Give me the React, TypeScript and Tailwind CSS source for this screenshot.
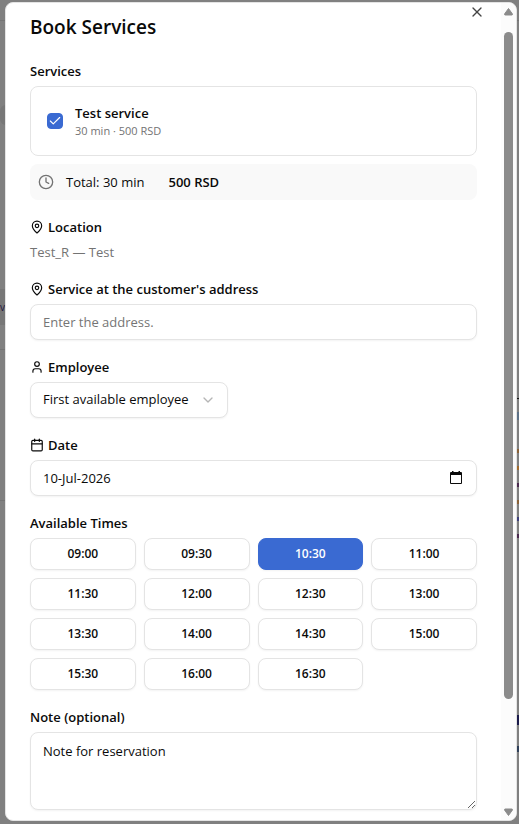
import { useState } from 'react'
import type { ReactNode } from 'react'
import { Calendar, Check, ChevronDown, Clock, MapPin, User, X } from 'lucide-react'
import clsx from 'clsx'

const TIMES = [
    '09:00', '09:30', '10:30', '11:00',
    '11:30', '12:00', '12:30', '13:00',
    '13:30', '14:00', '14:30', '15:00',
    '15:30', '16:00', '16:30',
]

const fieldClass = 'w-full rounded-lg border border-[#e4e4e4] bg-white px-3 text-[13px] shadow-xs outline-none placeholder:text-[#757575]'

function FieldLabel({ htmlFor, children }: { htmlFor?: string; children: ReactNode }) {
    return (
        <label htmlFor={htmlFor} className="flex items-center gap-1 text-[13px] leading-[14px] font-semibold">
            {children}
        </label>
    )
}

// Page that sits dimmed behind the dialog
function Backdrop() {
    return (
        <div aria-hidden="true" className="absolute inset-0 overflow-hidden bg-[#808080]">
            <div className="absolute inset-x-0 top-5 border-t border-[#747474]" />
            <div className="absolute top-[105px] left-0 h-5 w-5 rounded-md bg-[#777777]" />
            <div className="absolute top-[289px] left-0 flex h-9 w-5 items-center bg-[#777777]">
                <span className="text-[10px] text-[#1c1440]">v</span>
            </div>
            <div className="absolute top-[349px] left-0 w-5 border-t border-[#747474]" />
            <div className="absolute top-[500px] left-0 w-5 border-t border-[#747474]" />
            <div className="absolute top-[398px] right-0 flex w-0.5 flex-col gap-[13px]">
                <div className="h-px bg-[#111111]" />
                <div className="h-2 bg-[#5d7187]" />
                <div className="mt-4 h-1 bg-[#8a6238]" />
                <div className="h-1 bg-[#a06a2c]" />
                <div className="h-1 bg-[#4b2a50]" />
                <div className="h-1 bg-[#8a6238]" />
                <div className="h-1 bg-[#3d3f7a]" />
                <div className="h-1 bg-[#4b2a50]" />
            </div>
            <div className="absolute top-[715px] right-0 h-2.5 w-0.5 bg-[#1a1a4a]" />
            <div className="absolute top-[746px] right-0 h-1.5 w-0.5 bg-[#2f3f58]" />
        </div>
    )
}

function Scrollbar() {
    return (
        <div aria-hidden="true" className="flex w-[15px] shrink-0 flex-col items-center bg-[#fcfcfc] pt-1 pb-[3px] text-[#8b8b8b]">
            <svg viewBox="0 0 9 9" className="h-[9px] w-[9px]" fill="currentColor">
                <path d="M4.5 1.5 8.3 6.8Q8.8 8 7.8 8H1.2Q.2 8 .7 6.8Z" stroke="currentColor" strokeLinejoin="round" />
            </svg>
            <div className="mt-4 w-[9px] grow-[667] rounded-full bg-[#8b8b8b]" />
            <div className="grow-[109]" />
            <svg viewBox="0 0 9 9" className="h-[9px] w-[9px]" fill="currentColor">
                <path d="M4.5 7.5 8.3 2.2Q8.8 1 7.8 1H1.2Q.2 1 .7 2.2Z" stroke="currentColor" strokeLinejoin="round" />
            </svg>
        </div>
    )
}

export default function App() {
    const [selected, setSelected] = useState(true)
    const [address, setAddress] = useState('')
    const [date, setDate] = useState('10-Jul-2026')
    const [time, setTime] = useState('10:30')
    const [note, setNote] = useState('Note for reservation')

    return (
        <div className="relative min-h-screen pt-0.5 pr-0.5 pb-[3px] pl-[5px] font-['Open_Sans',sans-serif] text-[#0a0a0a]">
            <Backdrop />

            <div role="dialog" aria-labelledby="dialog-title" className="relative mx-auto flex max-w-lg overflow-hidden rounded-lg border border-[#e4e4e4] bg-white">
                <div className="relative min-w-0 flex-1 px-6 py-2.5">
                    <button type="button" aria-label="Close" className="absolute top-px right-4 text-[#444444]">
                        <X className="h-4 w-4" />
                    </button>

                    <h2 id="dialog-title" className="mb-[23px] text-[19px] leading-7 font-semibold">Book Services</h2>

                    <form className="flex flex-col gap-5" onSubmit={(e) => e.preventDefault()}>
                        <div className="flex flex-col gap-2">
                            <h3 className="text-[13px] leading-[14px] font-semibold">Services</h3>
                            <label className="flex items-center gap-3 rounded-lg border border-[#e4e4e4] p-4">
                                <span className="relative flex h-4 w-4">
                                    <input
                                        type="checkbox"
                                        checked={selected}
                                        onChange={(e) => setSelected(e.target.checked)}
                                        className="h-4 w-4 appearance-none rounded border border-[#d4d4d4] checked:border-[#3a6ad2] checked:bg-[#3a6ad2]"
                                    />
                                    {selected && <Check className="pointer-events-none absolute inset-px h-3.5 w-3.5 text-white" />}
                                </span>
                                <span className="flex flex-col">
                                    <span className="text-[13px] leading-5 font-semibold">Test service</span>
                                    <span className="text-[11px] leading-4 text-[#737373]">30 min · 500 RSD</span>
                                </span>
                            </label>
                            <div className="flex items-center gap-3 rounded-lg bg-[#f9f9f9] p-2 text-[13px] leading-5">
                                <Clock className="h-4 w-4 text-[#737373]" />
                                <span className="mr-3">Total: 30 min</span>
                                <span className="font-semibold">500 RSD</span>
                            </div>
                        </div>

                        <div className="flex flex-col gap-2">
                            <h3 className="flex items-center gap-1 text-[13px] leading-[14px] font-semibold">
                                <MapPin className="h-3.5 w-3.5" />
                                Location
                            </h3>
                            <p className="text-[13px] leading-5 text-[#737373]">Test_R — Test</p>
                        </div>

                        <div className="flex flex-col gap-2">
                            <FieldLabel htmlFor="address">
                                <MapPin className="h-3.5 w-3.5" />
                                Service at the customer's address
                            </FieldLabel>
                            <input
                                id="address"
                                type="text"
                                value={address}
                                onChange={(e) => setAddress(e.target.value)}
                                placeholder="Enter the address."
                                className={clsx(fieldClass, 'h-9')}
                            />
                        </div>

                        <div className="flex flex-col gap-2">
                            <FieldLabel htmlFor="employee">
                                <User className="h-3.5 w-3.5" />
                                Employee
                            </FieldLabel>
                            <div className="relative self-start">
                                <select id="employee" className={clsx(fieldClass, 'h-9 appearance-none pr-[38px]')}>
                                    <option>First available employee</option>
                                </select>
                                <ChevronDown className="pointer-events-none absolute top-2.5 right-3 h-4 w-4 text-[#b5b5b5]" />
                            </div>
                        </div>

                        <div className="flex flex-col gap-2">
                            <FieldLabel htmlFor="date">
                                <Calendar className="h-3.5 w-3.5" />
                                Date
                            </FieldLabel>
                            <div className="relative">
                                <input
                                    id="date"
                                    type="text"
                                    value={date}
                                    onChange={(e) => setDate(e.target.value)}
                                    className={clsx(fieldClass, 'h-9')}
                                />
                                <button type="button" aria-label="Open calendar" className="absolute inset-y-0 right-3.5">
                                    <svg viewBox="0 0 14 14" className="h-3.5 w-3.5" fill="currentColor">
                                        <path fillRule="evenodd" d="M3 0h1.5v1h5V0H11v1h1q1 0 1 1v10q0 1-1 1H2q-1 0-1-1V2q0-1 1-1h1ZM2 4v8h10V4Z" />
                                    </svg>
                                </button>
                            </div>
                        </div>

                        <div className="flex flex-col gap-2">
                            <h3 className="text-[13px] leading-[14px] font-semibold">Available Times</h3>
                            <div className="grid grid-cols-4 gap-2">
                                {TIMES.map((t) => (
                                    <button
                                        key={t}
                                        type="button"
                                        onClick={() => setTime(t)}
                                        className={clsx(
                                            'h-8 rounded-lg border text-xs font-semibold shadow-xs',
                                            t === time ? 'border-[#3a6ad2] bg-[#3a6ad2] text-white' : 'border-[#e4e4e4] bg-white'
                                        )}
                                    >
                                        {t}
                                    </button>
                                ))}
                            </div>
                        </div>

                        <div className="flex flex-col gap-2">
                            <FieldLabel htmlFor="note">Note (optional)</FieldLabel>
                            <textarea
                                id="note"
                                value={note}
                                onChange={(e) => setNote(e.target.value)}
                                className={clsx(fieldClass, 'block h-[78px] py-2 leading-5')}
                            />
                        </div>
                    </form>
                </div>
                <Scrollbar />
            </div>
        </div>
    )
}
